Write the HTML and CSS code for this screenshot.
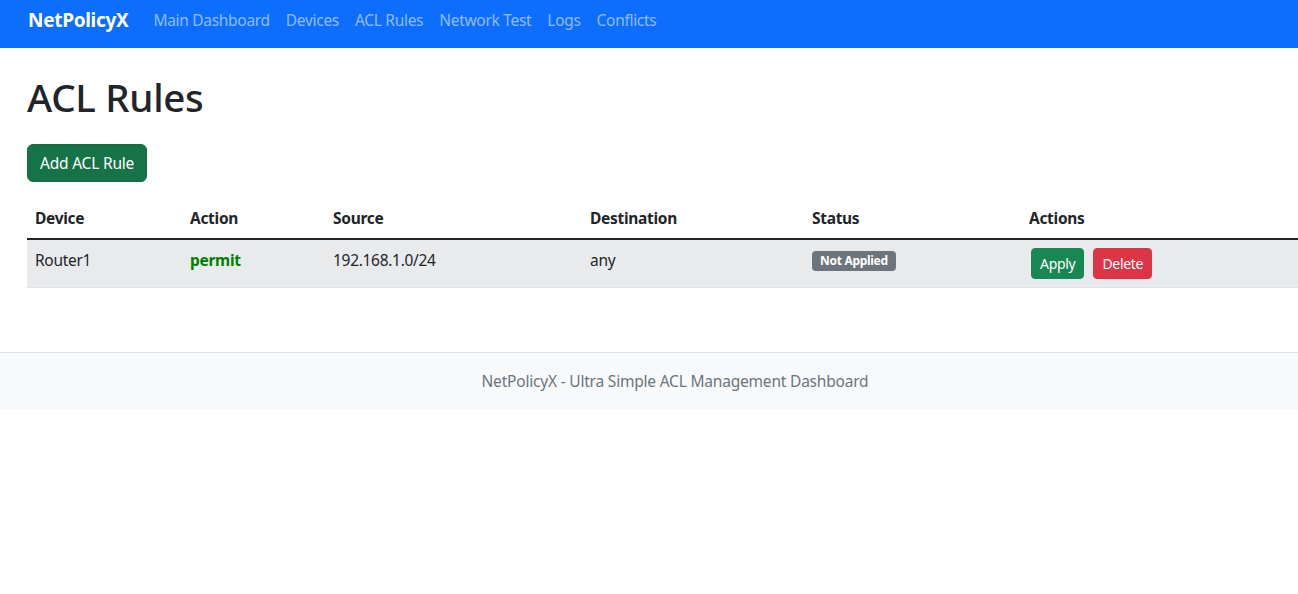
FILE: index.html
```html
<!DOCTYPE html>
<html lang="en">
<head>
<meta charset="utf-8">
<title>NetPolicyX - ACL Rules</title>
<link rel="stylesheet" href="styles.css">
</head>
<body>
<nav class="navbar">
  <a class="brand" href="#">NetPolicyX</a>
  <ul class="nav">
    <li><a href="#">Main Dashboard</a></li>
    <li><a href="#">Devices</a></li>
    <li><a href="#">ACL Rules</a></li>
    <li><a href="#">Network Test</a></li>
    <li><a href="#">Logs</a></li>
    <li><a href="#">Conflicts</a></li>
  </ul>
</nav>
<main class="content">
  <h1 class="title">ACL Rules</h1>
  <button class="btn btn-add">Add ACL Rule</button>
  <table class="table">
    <thead>
      <tr>
        <th class="c1">Device</th>
        <th class="c2">Action</th>
        <th class="c3">Source</th>
        <th class="c4">Destination</th>
        <th class="c5">Status</th>
        <th class="c6">Actions</th>
      </tr>
    </thead>
    <tbody>
      <tr>
        <td>Router1</td>
        <td><strong class="permit">permit</strong></td>
        <td>192.168.1.0/24</td>
        <td>any</td>
        <td><span class="badge">Not Applied</span></td>
        <td><button class="btn btn-sm btn-apply">Apply</button><button class="btn btn-sm btn-delete">Delete</button></td>
      </tr>
    </tbody>
  </table>
</main>
<footer class="footer">
  <span>NetPolicyX - Ultra Simple ACL Management Dashboard</span>
</footer>
</body>
</html>
```
FILE: styles.css
```css
* { box-sizing: border-box; }
html, body { margin: 0; padding: 0; }
body {
  font-family: "Noto Sans", "Open Sans", sans-serif;
  font-size: 16px;
  line-height: 1.5;
  color: #212529;
  background: #fff;
  overflow-x: hidden;
}
.navbar {
  display: flex;
  align-items: flex-start;
  height: 48px;
  background: #0d6efd;
  padding: 5px 28px 0;
}
.brand {
  color: #fff;
  font-size: 19px;
  font-weight: 700;
  line-height: 30px;
  text-decoration: none;
  margin-right: 17px;
  letter-spacing: -0.3px;
}
.nav {
  display: flex;
  list-style: none;
  margin: 0;
  padding: 0;
}
.nav a {
  display: block;
  padding: 3px 8px;
  line-height: 24px;
  color: rgba(255,255,255,0.55);
  text-decoration: none;
  font-size: 15.5px;
  letter-spacing: -0.3px;
}
.content {
  padding: 25px 0 16px 27px;
  margin-bottom: 48px;
}
.title {
  margin: 0 0 23px;
  font-size: 38.5px;
  font-weight: 500;
  line-height: 48px;
  letter-spacing: -0.3px;
}
.btn {
  display: inline-block;
  border: 1px solid transparent;
  font-family: inherit;
  color: #fff;
  cursor: pointer;
}
.btn-add {
  height: 38px;
  padding: 0 12px;
  font-size: 15.5px;
  border-radius: 6px;
  background: #157347;
  border-color: #146c43;
  margin-bottom: 16px;
  letter-spacing: -0.2px;
}
.table {
  width: 100%;
  border-collapse: collapse;
}
.table th {
  text-align: left;
  font-weight: 700;
  padding: 8px;
  line-height: 24px;
  border-bottom: 2px solid #212529;
  font-size: 15.5px;
  letter-spacing: -0.3px;
}
.c1 { width: 155px; }
.c2 { width: 143px; }
.c3 { width: 257px; }
.c4 { width: 222px; }
.c5 { width: 217px; }
.table td {
  padding: 8px;
  line-height: 24px;
  vertical-align: top;
  background: #e9eaec;
  border-bottom: 1px solid #dee2e6;
  font-size: 15.5px;
  letter-spacing: -0.3px;
  height: 48px;
}
.permit { color: green; font-weight: 700; }
.badge {
  display: inline-block;
  background: #6c757d;
  color: #fff;
  font-size: 12px;
  font-weight: 700;
  line-height: 1;
  padding: 4px 8px 4px;
  border-radius: 4px;
  vertical-align: 1px;
  letter-spacing: -0.3px;
}
.btn-sm {
  height: 31px;
  padding: 0 8px;
  font-size: 14px;
  border-radius: 4px;
  margin: 0 9px 0 2px;
  vertical-align: top;
  letter-spacing: -0.3px;
}
.btn-sm + .btn-sm { margin-left: 0; }
.btn-apply { background: #198754; border-color: #198754; }
.btn-delete { background: #dc3545; border-color: #dc3545; }
.footer {
  border-top: 1px solid #dee2e6;
  background: #f8f9fa;
  padding: 16px 0 16px 52px;
  text-align: center;
  color: #6c757d;
  font-size: 15.5px;
  line-height: 24px;
  letter-spacing: -0.2px;
}
```
